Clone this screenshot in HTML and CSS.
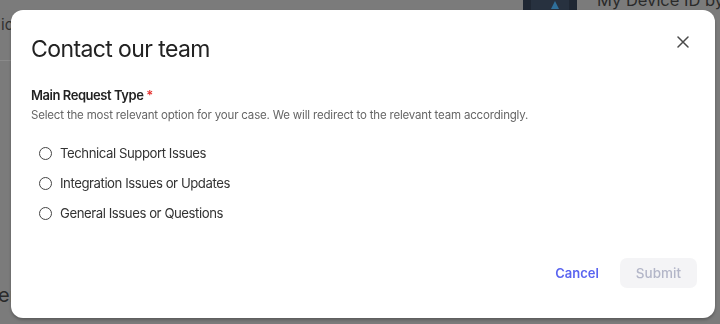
FILE: index.html
```html
<!DOCTYPE html>
<html lang="en">
<head>
<meta charset="utf-8">
<title>Contact our team</title>
<link rel="stylesheet" href="styles.css">
</head>
<body>
<div class="page">
  <div class="bg-left">
    <div class="bg-label">ic</div>
    <div class="bg-rule"></div>
    <div class="bg-fill"></div>
    <div class="bg-heading">er</div>
  </div>
  <div class="bg-right">
    <div class="app-thumb">
      <svg width="54" height="54" viewBox="0 0 54 54"><rect x="0" y="0" width="54" height="54" fill="#1f2733"/><rect x="8" y="0" width="38" height="54" fill="#27313f"/><path d="M32 45 L36 53 L28 53 Z" fill="#2f6f9a"/></svg>
    </div>
    <div class="app-name">My Device ID by Applications</div>
  </div>
</div>

<div class="overlay">
  <div class="modal" role="dialog" aria-labelledby="modal-title">
    <div class="modal-header">
      <h2 class="modal-title" id="modal-title">Contact our team</h2>
      <button class="close-btn" aria-label="Close">
        <svg width="12" height="12" viewBox="0 0 12 12"><path d="M1 1 L11 11 M11 1 L1 11" stroke="#4a4a4a" stroke-width="1.5" stroke-linecap="round"/></svg>
      </button>
    </div>
    <div class="field">
      <div class="field-label">Main Request Type <span class="req">*</span></div>
      <div class="field-help">Select the most relevant option for your case. We will redirect to the relevant team accordingly.</div>
      <div class="options">
        <label class="option"><span class="radio"></span><span>Technical Support Issues</span></label>
        <label class="option"><span class="radio"></span><span>Integration Issues or Updates</span></label>
        <label class="option"><span class="radio"></span><span>General Issues or Questions</span></label>
      </div>
    </div>
    <div class="modal-footer">
      <button class="btn-link">Cancel</button>
      <button class="btn-submit" disabled>Submit</button>
    </div>
  </div>
</div>
</body>
</html>
```
FILE: styles.css
```css
* { box-sizing: border-box; }
html, body { margin: 0; padding: 0; }
body {
  width: 720px;
  height: 324px;
  overflow: hidden;
  background: #7b7b7b;
  font-family: Inter, "Noto Sans", sans-serif;
  color: #222;
}
.page {
  display: flex;
  justify-content: space-between;
  height: 324px;
}
.bg-left {
  width: 60px;
  display: flex;
  flex-direction: column;
}
.bg-label {
  padding-left: 1px;
  padding-top: 16px;
  font-size: 15px;
  line-height: 18px;
  color: #303030;
}
.bg-rule {
  margin-top: 26px;
  height: 1px;
  background: #8a8a8a;
}
.bg-fill { flex: 1; }
.bg-heading {
  font-size: 20px;
  line-height: 24px;
  color: #2a2a2a;
  margin-bottom: 17px;
  margin-left: -2px;
}
.bg-right {
  width: 197px;
  display: flex;
  gap: 20px;
  align-items: flex-start;
  margin-top: -44px;
  overflow: hidden;
}
.app-thumb { flex: none; width: 54px; height: 54px; }
.app-thumb svg { display: block; }
.app-name {
  white-space: nowrap;
  font-size: 16.5px;
  line-height: 20px;
  letter-spacing: 0;
  margin-top: 34px;
  color: #2a2a2a;
}

.overlay {
  position: fixed;
  inset: 0;
  display: flex;
  padding: 10px 5px 6px 11px;
}
.modal {
  flex: 1;
  background: #fff;
  border-radius: 12px;
  box-shadow: 0 2px 3px rgba(0,0,0,0.25);
  display: flex;
  flex-direction: column;
  padding: 23px 18px 30px 20px;
}
.modal-header {
  display: flex;
  justify-content: space-between;
  align-items: flex-start;
}
.modal-title {
  margin: 0;
  font-size: 23px;
  line-height: 32px;
  font-weight: 400;
  letter-spacing: -0.6px;
  color: #222;
}
.close-btn {
  border: 0;
  background: none;
  padding: 0;
  margin: -1px 4px 0 0;
  width: 20px;
  height: 20px;
  display: flex;
  align-items: center;
  justify-content: center;
}
.field { margin-top: 20px; }
.field-label {
  font-size: 13px;
  line-height: 20px;
  font-weight: 600;
  letter-spacing: -0.45px;
  color: #222;
}
.req { color: #e5312f; }
.field-help {
  margin-top: 1px;
  font-size: 11.5px;
  line-height: 18px;
  letter-spacing: -0.18px;
  color: #666;
}
.options {
  margin-top: 19px;
  display: flex;
  flex-direction: column;
  gap: 10px;
  padding-left: 8px;
}
.option {
  display: flex;
  align-items: center;
  gap: 8px;
  height: 20px;
  font-size: 13.2px;
  letter-spacing: -0.45px;
  color: #333;
}
.radio {
  width: 13px;
  height: 13px;
  border: 1.5px solid #444;
  border-radius: 50%;
  flex: none;
}
.modal-footer {
  margin-top: auto;
  display: flex;
  justify-content: flex-end;
  align-items: center;
  gap: 11px;
}
.btn-link {
  border: 0;
  background: none;
  font-family: inherit;
  font-size: 13px;
  font-weight: 600;
  color: #5a64f0;
  padding: 0 10px 0 12px;
  height: 30px;
}
.btn-submit {
  border: 0;
  font-family: inherit;
  font-size: 13.5px;
  font-weight: 500;
  color: #b3b6c8;
  background: #f4f4f6;
  border-radius: 7px;
  height: 30px;
  padding: 0 16px;
}
```
